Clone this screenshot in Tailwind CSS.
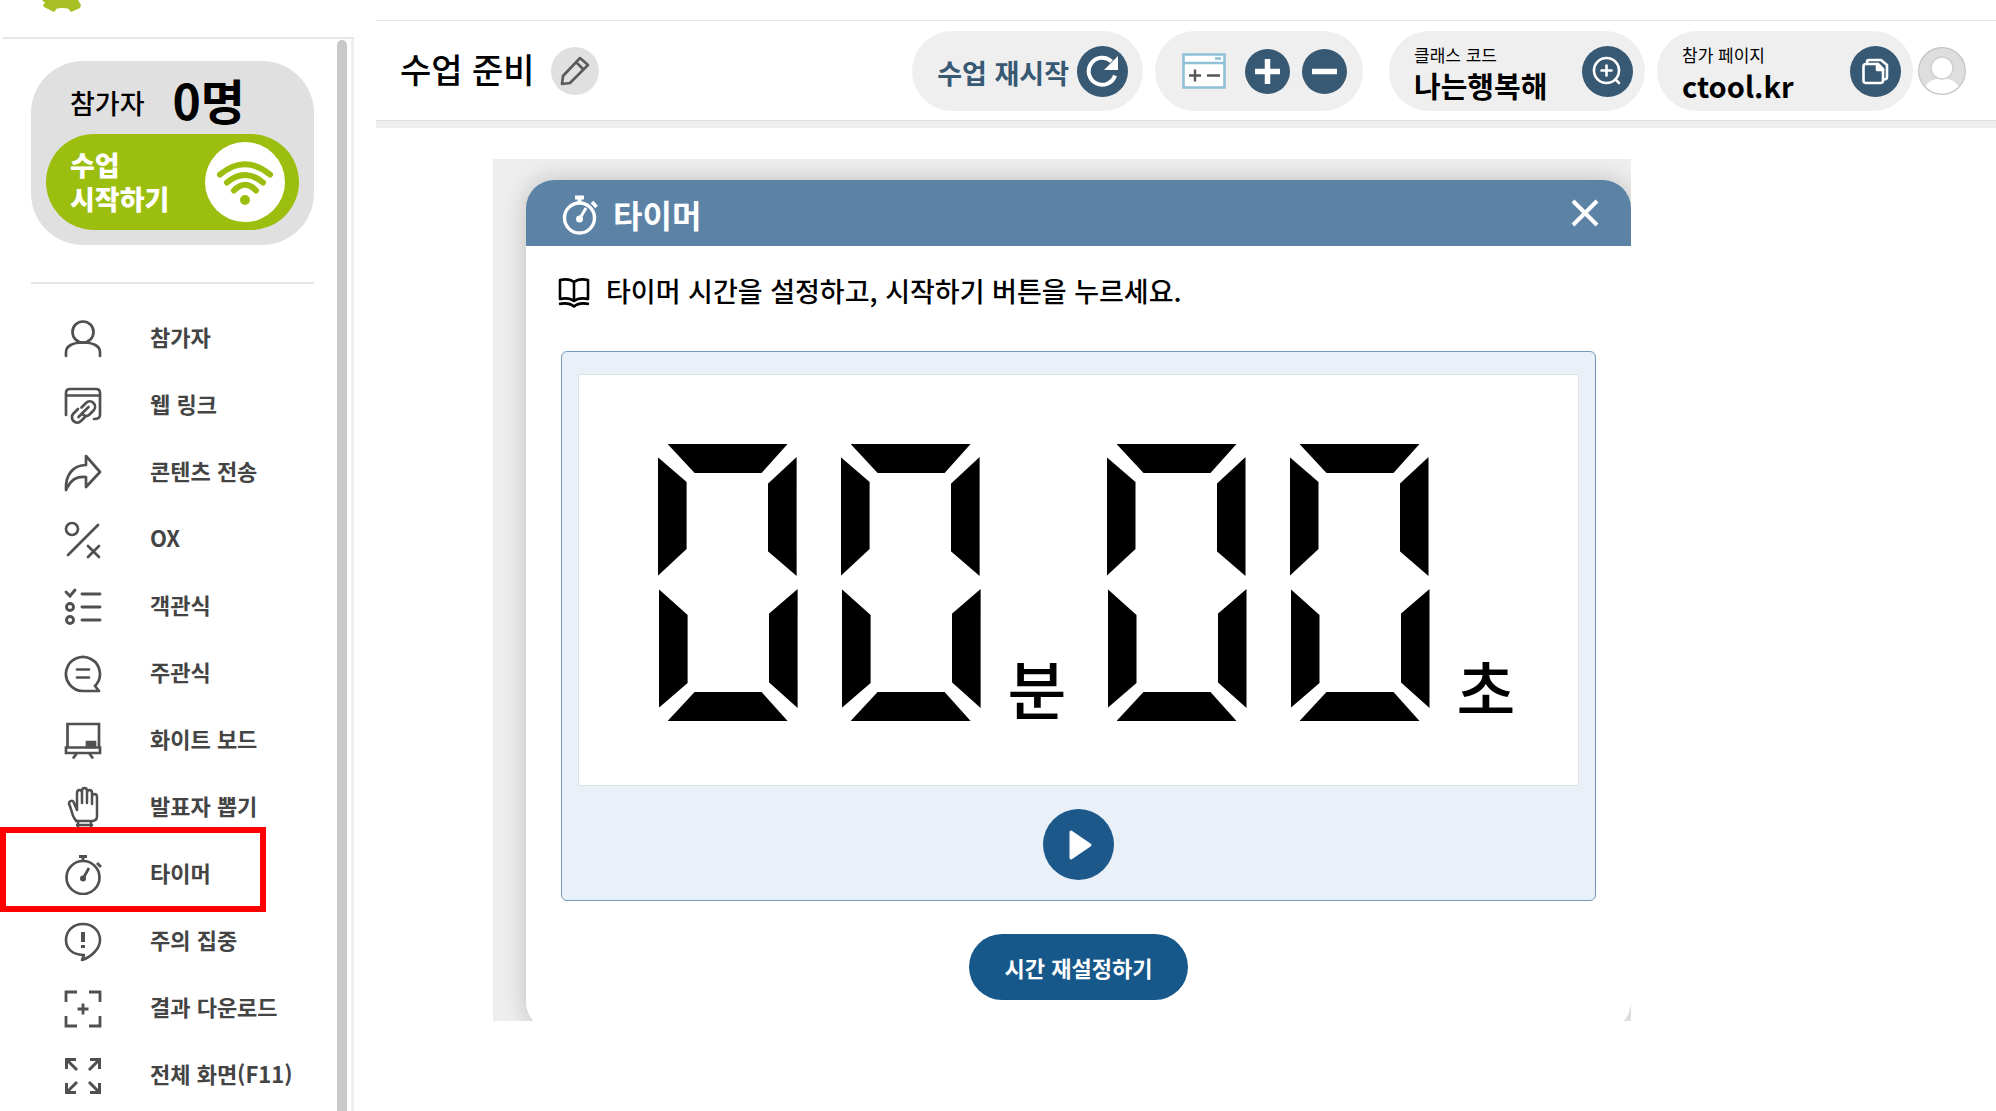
<!DOCTYPE html>
<html lang="ko">
<head>
<meta charset="utf-8">
<meta name="viewport" content="width=device-width, initial-scale=1">
<title>수업 준비</title>
<script src="https://cdn.jsdelivr.net/npm/@tailwindcss/browser@4"></script>
</head>
<body class="flex min-h-screen bg-white font-['Noto_Sans_CJK_KR',sans-serif] text-black">

<!-- Sidebar -->
<aside class="flex w-[354px] shrink-0 flex-col">
  <div class="ml-[3px] h-[39px] border-b-2 border-[#e6e6e6] pl-[39px]">
    <svg class="h-3 w-10" viewBox="0 0 40 12" fill="#a8c023" aria-hidden="true"><path d="M0 0H36L39 5L38 8L29 12L26 8.500Q20 7.500 15 8.500L12 12L2 7L1 5L3 3Z"/></svg>
  </div>
  <div class="flex grow border-r-[3px] border-[#eeeeee]">
    <div class="grow pr-[23px] pt-[22px]">
      <section class="ml-[31px] h-[184px] rounded-[52px] bg-[#e0e0e0] px-[15px] pt-2">
        <p class="flex h-16 items-center gap-7 pl-6"><span class="pt-1 text-[27px] font-medium">참가자</span><strong class="pb-1 text-[48px] leading-[64px] font-bold">0명</strong></p>
        <button class="mt-px flex h-24 w-full items-center justify-between rounded-full bg-[#9cbe0e] pr-[14px] pl-6 text-left text-[27px] leading-[34px] font-black text-white">
          <span>수업<br>시작하기</span>
          <svg class="size-20" viewBox="0 0 80 80" fill="none" stroke="#9cbe0e" stroke-width="6" stroke-linecap="round" aria-hidden="true"><circle cx="40" cy="40" r="40" fill="#fff" stroke="none"/><path d="M15 32.500Q40 12 65 32.500M22 40.500Q40 25.500 58 40.500M29 48.500Q40 37 51 48.500"/><circle cx="40" cy="58" r="5" fill="#9cbe0e" stroke="none"/></svg>
        </button>
      </section>
      <hr class="mt-[37px] ml-[31px] border-t-2 border-[#e6e6e6]">
      <nav class="mt-[19px]">
        <ul class="text-[22px] text-[#444]">
          <li><button class="flex h-[67px] w-full items-center gap-[47px] pl-[63px] text-left font-bold"><svg class="mt-1 size-10" viewBox="0 0 40 40" fill="none" stroke="#505050" stroke-width="2.700" stroke-linecap="round"><circle cx="20" cy="13" r="10.500"/><path d="M3 37V33C3 27 10 23.500 20 23.500S37 27 37 33V37"/></svg>참가자</button></li>
          <li><button class="flex h-[67px] w-full items-center gap-[47px] pl-[63px] text-left font-bold"><svg class="mt-1 size-10" viewBox="0 0 40 40" fill="none" stroke="#505050" stroke-width="2.700" stroke-linecap="round"><path d="M3 29V7Q3 3 7 3H33Q37 3 37 7V29Q37 33 31 33M3 9.500H37"/><path d="M18.500 21.500L23 17A5.200 5.200 0 0 1 30.500 24.500L26 29Q23.500 31 20.500 29M21.500 31.500L18 35A5.200 5.200 0 0 1 10.500 27.500L15 23M15.500 31L25.500 21"/></svg>웹 링크</button></li>
          <li><button class="flex h-[67px] w-full items-center gap-[47px] pl-[63px] text-left font-bold"><svg class="mt-1 size-10" viewBox="0 0 40 40" fill="none" stroke="#505050" stroke-width="2.700" stroke-linejoin="round"><path d="M23 3L37 19L23 34V24C14 23 8 26 3 37C2 21 11 12 23 12Z"/></svg>콘텐츠 전송</button></li>
          <li><button class="flex h-[67px] w-full items-center gap-[47px] pl-[63px] text-left font-bold"><svg class="mt-1 size-10" viewBox="0 0 40 40" fill="none" stroke="#505050" stroke-width="2.700" stroke-linecap="round"><circle cx="9" cy="9" r="6"/><path d="M35 5L5 35M25 26L36 37M36 26L25 37"/></svg>OX</button></li>
          <li><button class="flex h-[67px] w-full items-center gap-[47px] pl-[63px] text-left font-bold"><svg class="mt-1 size-10" viewBox="0 0 40 40" fill="none" stroke="#505050" stroke-width="2.900" stroke-linecap="round"><path d="M3 5L7 9L12 3M19 7H37M19 20H37M19 33H37"/><circle cx="7" cy="20" r="3.500"/><circle cx="7" cy="33" r="3.500"/></svg>객관식</button></li>
          <li><button class="flex h-[67px] w-full items-center gap-[47px] pl-[63px] text-left font-bold"><svg class="mt-1 size-10" viewBox="0 0 40 40" fill="none" stroke="#505050" stroke-width="2.700" stroke-linecap="round" stroke-linejoin="round"><path d="M20 37A17 17 0 1 1 32 32L36 37ZM14 15.500H26M14 23.500H26"/></svg>주관식</button></li>
          <li><button class="flex h-[67px] w-full items-center gap-[47px] pl-[63px] text-left font-bold"><svg class="mt-1 size-10" viewBox="0 0 40 40" fill="none" stroke="#505050" stroke-width="2.700"><path d="M4.500 26V3H36V26M3 26.500H37V32H3ZM14 32L10 37.500M26 32L30 37.500"/><path d="M24 21H32V26H24Z" fill="#505050"/></svg>화이트 보드</button></li>
          <li><button class="flex h-[67px] w-full items-center gap-[47px] pl-[63px] text-left font-bold"><svg class="mt-1 h-11 w-10" viewBox="0 0 40 44" fill="none" stroke="#505050" stroke-width="2.500" stroke-linejoin="round" stroke-linecap="round"><path d="M14 24V7Q14 4 16.500 4T19 7V17M19 7V5Q19 2 21.500 2T24 5V17M24 7Q24 4 26.500 4T29 7V18M29 11Q29 8 31.500 8T34 11V30Q34 35 29 35H14C9 33 9 23 6 18C6 14 10 14 11 17L14 24M13 35H30M14 39H29M15 43V35M28 43V35M15 43H28"/></svg>발표자 뽑기</button></li>
          <li class="relative">
            <button class="flex h-[67px] w-full items-center gap-[47px] pl-[63px] text-left font-bold"><svg class="mt-1 size-10" viewBox="0 0 40 40" fill="none" stroke="#505050" stroke-width="2.700"><circle cx="20" cy="22.500" r="16.500"/><path d="M16 1.500H24M20 1.500V6M34 8L38 12" stroke-width="2.800"/><path d="M20 23.500L26 13"/><circle cx="20" cy="23.500" r="3" fill="#505050" stroke="none"/></svg>타이머</button>
            <div class="pointer-events-none absolute -top-3 left-0 h-[85px] w-[266px] border-6 border-[#ff0000]"></div>
          </li>
          <li><button class="flex h-[67px] w-full items-center gap-[47px] pl-[63px] text-left font-bold"><svg class="mt-1 size-10" viewBox="0 0 40 40" fill="none" stroke="#505050" stroke-width="2.600" stroke-linejoin="round"><path d="M37 18C37 9 30 2 20 2S3 9 3 18C3 27 10 33 21 33L19 38C28 35 37 27 37 18Z"/><path d="M20 10V20M20 23V26" stroke-width="4"/></svg>주의 집중</button></li>
          <li><button class="flex h-[67px] w-full items-center gap-[47px] pl-[63px] text-left font-bold"><svg class="mt-1 size-10" viewBox="0 0 40 40" fill="none" stroke="#505050" stroke-width="2.800"><path d="M3 13V3H14M26 3H37V13M3 27V37H14M26 37H37V27M20 14.500V25.500M14.500 20H25.500"/></svg>결과 다운로드</button></li>
          <li><button class="flex h-[67px] w-full items-center gap-[47px] pl-[63px] text-left font-bold"><svg class="mt-1 size-10" viewBox="0 0 40 40" fill="none" stroke="#505050" stroke-width="3"><path d="M3.500 13V3.500H13M3.500 3.500L14 14M27 3.500H36.500V13M36.500 3.500L26 14M3.500 27V36.500H13M3.500 36.500L14 26M27 36.500H36.500V27M36.500 36.500L26 26"/></svg>전체 화면(F11)</button></li>
        </ul>
      </nav>
    </div>
    <div class="mt-px mr-1 w-[10px] shrink-0 rounded-t-full bg-[#c9c9c9]"></div>
  </div>
</aside>

<main class="ml-[22px] min-w-0 grow pt-5">
  <!-- Top bar -->
  <header class="flex h-[108px] items-center border-t border-b-[7px] border-t-[#e2e9ee] border-b-[#eeeeee] pr-[30px] pl-6 shadow-[inset_0_-1px_#dfdfdf]">
    <h1 class="pb-1 text-[34px] leading-[48px] font-medium">수업 준비</h1>
    <button class="ml-4 flex size-12 shrink-0 items-center justify-center rounded-full bg-[#e0e0e0]" aria-label="수업 이름 편집">
      <svg class="size-8" viewBox="0 0 32 32" fill="none" stroke="#5a5a5a" stroke-width="2.600" stroke-linejoin="round"><path d="M3 29L4 21L21 3L29 10L11 28ZM17 7L24 14"/></svg>
    </button>

    <button class="ml-auto flex h-20 shrink-0 items-center gap-2 rounded-full bg-[#efefef] pr-[15px] pl-[25px] text-[27px] font-bold text-[#385973]"><span class="pt-1">수업 재시작</span>
      <svg class="size-[51px]" viewBox="0 0 51 51" aria-hidden="true"><circle cx="25.500" cy="25.500" r="25.500" fill="#385973"/><path d="M38 29.500A13.500 13.500 0 1 1 34.500 15.500" fill="none" stroke="#fff" stroke-width="4"/><path d="M41 10V24H27Z" fill="#fff"/></svg>
    </button>

    <div class="ml-3 flex h-20 shrink-0 items-center rounded-full bg-[#efefef] pr-4 pl-[27px]">
      <svg class="h-9 w-11" viewBox="0 0 44 36" aria-hidden="true"><path d="M1.500 1.500H42.500V34.500H1.500ZM1.500 10H42.500" fill="#fff" stroke="#8fc1d9" stroke-width="2.600"/><path d="M33 5.500H39" stroke="#8fc1d9" stroke-width="2.600"/><path d="M7 22.500H19M13 16.500V28.500M25 22.500H38" stroke="#555" stroke-width="2.400"/></svg>
      <button class="ml-[19px]" aria-label="확대"><svg class="size-[45px]" viewBox="0 0 45 45"><circle cx="22.500" cy="22.500" r="22.500" fill="#385973"/><path d="M10 22.500H35M22.500 10V35" stroke="#fff" stroke-width="5.500"/></svg></button>
      <button class="ml-3" aria-label="축소"><svg class="size-[45px]" viewBox="0 0 45 45"><circle cx="22.500" cy="22.500" r="22.500" fill="#385973"/><path d="M10 22.500H35" stroke="#fff" stroke-width="5.500"/></svg></button>
    </div>

    <div class="ml-[26px] flex h-20 w-64 shrink-0 items-center justify-between rounded-full bg-[#efefef] pr-3 pl-[25px]">
      <p class="pt-0.5"><span class="block text-[17px] leading-[26px]">클래스 코드</span><strong class="block text-[29px] leading-[34px] font-bold">나는행복해</strong></p>
      <button aria-label="클래스 코드 크게 보기"><svg class="size-[51px]" viewBox="0 0 51 51" fill="none" stroke="#fff" stroke-width="2.600" stroke-linecap="round"><circle cx="25.500" cy="25.500" r="25.500" fill="#385973" stroke="none"/><circle cx="24.500" cy="24.500" r="12.500"/><path d="M33.500 33.500L37 37M19.500 24.500H29.500M24.500 19.500V29.500"/></svg></button>
    </div>

    <div class="ml-3 flex h-20 w-64 shrink-0 items-center justify-between rounded-full bg-[#efefef] pr-3 pl-[25px]">
      <p class="pt-0.5"><span class="block text-[17px] leading-[26px]">참가 페이지</span><strong class="block text-[29px] leading-[34px] font-bold">ctool.kr</strong></p>
      <button aria-label="주소 복사"><svg class="size-[51px]" viewBox="0 0 51 51" fill="none" stroke="#fff" stroke-width="2.600" stroke-linejoin="round"><circle cx="25.500" cy="25.500" r="25.500" fill="#385973" stroke="none"/><path d="M16 18H28L33 23V34.500Q33 37 30.500 37H16Q13.500 37 13.500 34.500V20.500Q13.500 18 16 18ZM17 18V16Q17 14 19 14H31L37 19V31Q37 33.500 34 33.500"/><path d="M27 18V24H33Z" fill="#fff"/></svg></button>
    </div>

    <button class="ml-[5px] shrink-0" aria-label="내 계정"><svg class="size-12" viewBox="0 0 48 48"><circle cx="24" cy="24" r="23" fill="#dedede"/><path d="M7 40C10 34 17 31.500 24 31.500S38 34 41 40A23 23 0 0 1 7 40Z" fill="#fff"/><circle cx="24" cy="21" r="11" fill="#fff" stroke="#d0d0d0" stroke-width="1.500"/><circle cx="24" cy="24" r="23.300" fill="none" stroke="#c2c2c2" stroke-width="1.200"/></svg></button>
  </header>

  <!-- Timer dialog -->
  <div class="mt-[31px] mr-[365px] ml-[117px] overflow-hidden bg-[#eeeeee] pt-[21px] pl-[33px]">
    <section class="h-[841px] overflow-visible" aria-labelledby="timer-title">
      <div class="h-[850px] overflow-hidden rounded-[28px] bg-white shadow-[0_0_24px_rgba(0,0,0,0.2)]">
        <div class="flex h-[66px] items-center bg-[#5c83a5] pr-[30px] pl-9 text-white">
          <svg class="mt-1 size-10 shrink-0" viewBox="0 0 40 40" fill="none" stroke="#fff"><circle cx="17.500" cy="23" r="15" stroke-width="3.400"/><path d="M13 2.500H22M17.500 2V8" stroke-width="4"/><path d="M30 7L34.500 12" stroke-width="3.600"/><path d="M17.500 24L24 13" stroke-width="3"/><circle cx="17.500" cy="24" r="3.500" fill="#fff" stroke="none"/></svg>
          <h2 id="timer-title" class="ml-[11px] pt-0.5 text-[32px] leading-[48px] font-bold">타이머</h2>
          <button class="ml-auto" aria-label="닫기"><svg class="size-8" viewBox="0 0 32 32" stroke="#fff" stroke-width="4"><path d="M4 4L28 28M28 4L4 28"/></svg></button>
        </div>
        <div class="px-[35px] pt-[25px]">
          <p class="flex h-10 items-center gap-4 text-[27px] font-medium whitespace-nowrap">
            <svg class="mt-1 -ml-[3px] size-8 shrink-0" viewBox="0 0 32 32" fill="none" stroke="#000" stroke-width="2.600" stroke-linejoin="round"><path d="M16 5Q11 1 2 3V22Q11 20 16 24Q21 20 30 22V3Q21 1 16 5ZM16 5V24M1 27Q11 25 16 29.500Q21 25 31 27"/></svg>
            타이머 시간을 설정하고, 시작하기 버튼을 누르세요.
          </p>
          <div class="mt-10 flex h-[550px] flex-col items-center rounded-md border border-[#739abb] bg-[#e9f0f7] px-4 pt-[22px]">
            <div class="flex h-[412px] w-full items-end justify-center border border-[#dfe2e5] bg-white pb-16 pl-4" role="timer" aria-label="00분 00초">
              <div class="flex gap-11" data-value="00"></div>
              <span class="mr-10 ml-7 text-[64px] leading-[70px] font-medium">분</span>
              <div class="flex gap-11" data-value="00"></div>
              <span class="ml-7 text-[64px] leading-[70px] font-medium">초</span>
            </div>
            <button class="mt-[23px]" aria-label="시작하기"><svg class="size-[71px]" viewBox="0 0 71 71"><circle cx="35.500" cy="35.500" r="35.500" fill="#1c588a"/><path d="M28 23L47 36L28 49Z" fill="#fff" stroke="#fff" stroke-width="3" stroke-linejoin="round"/></svg></button>
          </div>
          <button class="mx-auto mt-[33px] block h-[66px] rounded-full bg-[#17588b] px-9 text-[22px] font-bold text-white">시간 재설정하기</button>
        </div>
      </div>
    </section>
  </div>
</main>

<script>
// Seven-segment display: each bar is switched on by the digit it shows.
const BARS = {
  a: 'absolute top-0 left-[10px] h-[29px] w-[120px] bg-black [clip-path:polygon(0_0,120px_0,94px_29px,27px_29px)]',
  b: 'absolute top-[13px] left-[110px] h-[119px] w-[29px] bg-black [clip-path:polygon(29px_0,29px_119px,0_94px,0_27px)]',
  c: 'absolute top-[145px] left-[111px] h-[119px] w-[29px] bg-black [clip-path:polygon(29px_0,29px_119px,0_93px,0_25px)]',
  d: 'absolute top-[248px] left-[10px] h-[29px] w-[120px] bg-black [clip-path:polygon(27px_0,94px_0,120px_29px,0_29px)]',
  e: 'absolute top-[145px] left-px h-[119px] w-[29px] bg-black [clip-path:polygon(0_0,29px_26px,29px_94px,0_119px)]',
  f: 'absolute top-[13px] left-0 h-[119px] w-[29px] bg-black [clip-path:polygon(0_0,29px_25px,29px_92px,0_119px)]',
  g: 'absolute top-[124px] left-[20px] h-[29px] w-[99px] bg-black'
};
const LIT = ['abcdef', 'bc', 'abged', 'abgcd', 'fgbc', 'afgcd', 'afgedc', 'abc', 'abcdefg', 'abcdfg'];
document.querySelectorAll('[data-value]').forEach(group => {
  for (const n of group.dataset.value) {
    const digit = document.createElement('div');
    digit.className = 'relative h-[277px] w-[139px]';
    for (const bar of LIT[n]) {
      const el = document.createElement('i');
      el.className = BARS[bar];
      digit.append(el);
    }
    group.append(digit);
  }
});
</script>
</body>
</html>
